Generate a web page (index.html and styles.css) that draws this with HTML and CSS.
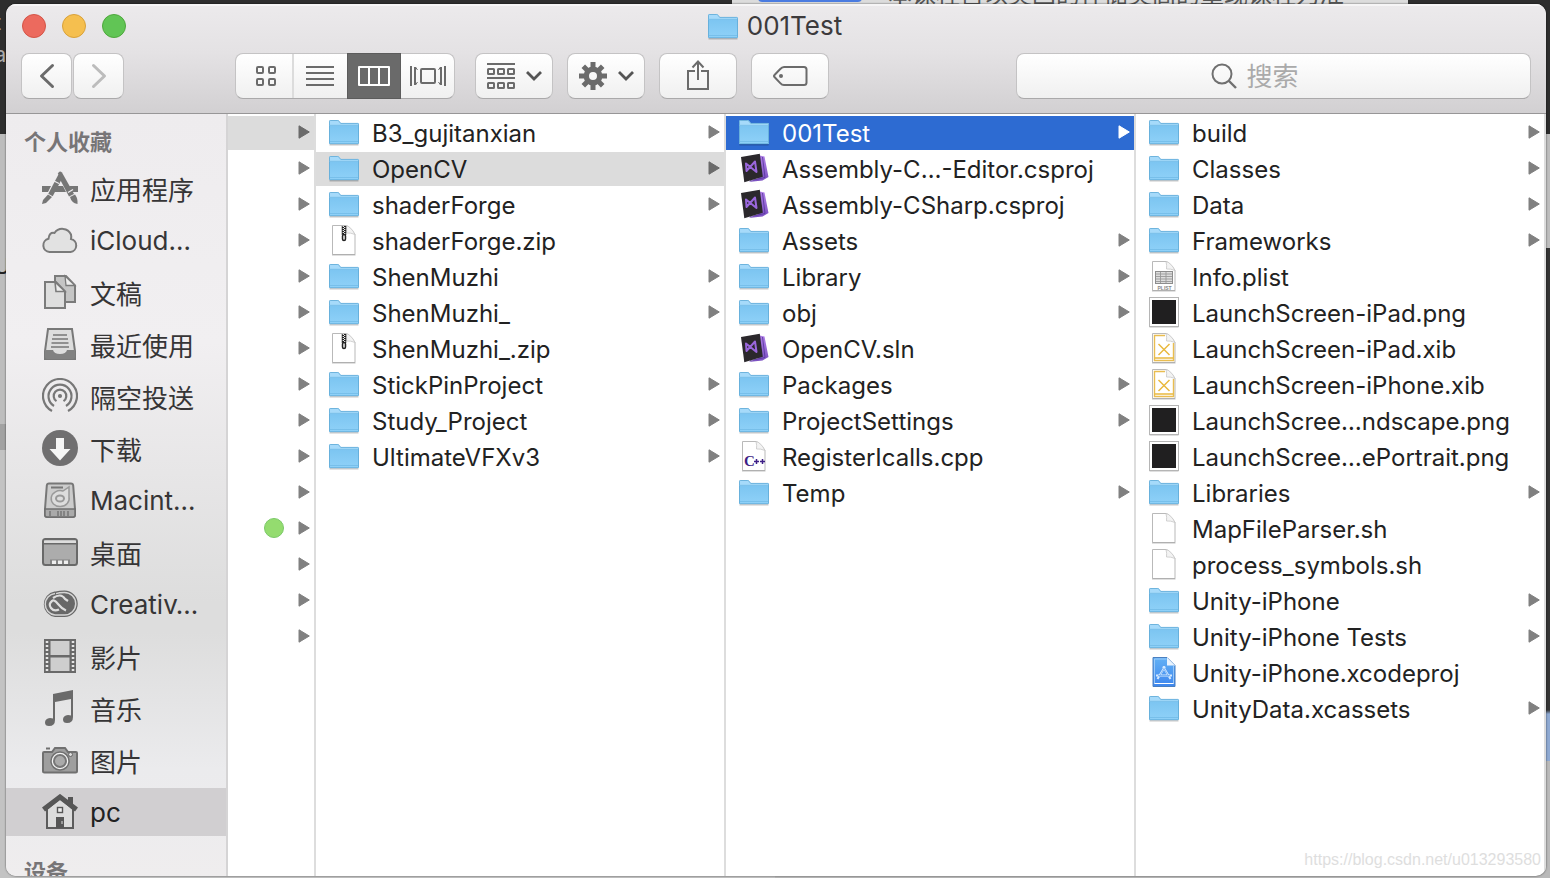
FILE: index.html
```html
<!DOCTYPE html>
<html lang="zh-CN">
<head>
<meta charset="utf-8">
<title>001Test</title>
<link rel="stylesheet" href="styles.css">
</head>
<body>
<svg class="defs" aria-hidden="true">
  <defs>
    <linearGradient id="gFolder" x1="0" y1="0" x2="0" y2="1"><stop offset="0" stop-color="#7cc5f1"/><stop offset="1" stop-color="#8fd1f8"/></linearGradient>
    <linearGradient id="gXcode" x1="0" y1="0" x2="0" y2="1"><stop offset="0" stop-color="#62b1f5"/><stop offset="1" stop-color="#3e86ee"/></linearGradient>
    <linearGradient id="gVs" x1="0" y1="0" x2="0" y2="1"><stop offset="0" stop-color="#b07fe8"/><stop offset="1" stop-color="#7a4fc0"/></linearGradient>
  </defs>
  <symbol id="folder" viewBox="0 0 32 32">
    <path d="M1.500 28.800h29" stroke="#000" stroke-opacity=".22" stroke-width="1.400"/>
    <path d="M1 27.500V5.500q0-1.500 1.500-1.500h7q1 0 1.800 1l1.500 2h17q1.200 0 1.200 1.200V27.500z" fill="#a6dafa"/>
    <path d="M1 9.500h30V27q0 1-1 1H2q-1 0-1-1z" fill="url(#gFolder)"/>
    <path d="M1.500 9.500V27q0 .700.700.700h27.600q.700 0 .700-.700V8.200q0-.800-.800-.800H12.700L11 5.200q-.500-.700-1.300-.700H2.300q-.800 0-.800.800z" fill="none" stroke="#5fa9d6" stroke-width=".8"/>
    <path d="M2 9.300h28M2 25.500h28" stroke="#6fb8e4" stroke-width=".7"/>
  </symbol>
  <symbol id="page" viewBox="0 0 32 32">
    <path d="M4.500 1.500h13.500q4 1 9 9v20H4.500z" fill="#fff" stroke="#b9b9b9"/>
    <path d="M4 31h23.500" stroke="#999" stroke-opacity=".6"/>
    <path d="M18 1.500q1 4 .5 7.500 4-.5 8.500 1.500-4-8-9-9z" fill="#f3f3f3" stroke="#c6c6c6" stroke-width=".8"/>
  </symbol>
  <symbol id="zip" viewBox="0 0 32 32">
    <use href="#page"/>
    <path d="M16 2v9" stroke="#222" stroke-width="4.500"/>
    <path d="M15.300 2v9M16.700 3v8" stroke="#fff" stroke-width="1.200" stroke-dasharray="1 1"/>
    <rect x="14.500" y="10.500" width="3" height="6" rx="1.500" fill="#eee" stroke="#222" stroke-width="1.500"/>
  </symbol>
  <symbol id="vs" viewBox="0 0 32 32">
    <path d="M20 3l6.500 1.500L30.500 25l-6 3.500-14 1.500 10-4z" fill="url(#gVs)"/>
    <path d="M24.500 5l2.500 20.500-15 3" fill="none" stroke="#55339a" stroke-width=".8"/>
    <path d="M3 5L21.800 1.800l3 23L6.300 30.300z" fill="#2b282c"/>
    <path d="M8 11.500l.500 7.500 8.500-9.500 1.500 10.500z" fill="none" stroke="#9a67dc" stroke-width="2" stroke-linejoin="round"/>
  </symbol>
  <symbol id="cpp" viewBox="0 0 32 32">
    <use href="#page"/>
    <text x="6" y="26" class="glyph-cpp">C</text>
    <path d="M16 21.500h5M18.500 19v5M22 21.500h5M24.500 19v5" stroke="#3d1f86" stroke-width="1.500"/>
  </symbol>
  <symbol id="plist" viewBox="0 0 32 32">
    <use href="#page"/>
    <rect x="7.500" y="11.500" width="17" height="12" fill="#ddd" stroke="#8d8d8d"/>
    <path d="M8 14h16M8 16.500h16M8 19h16M8 21.500h16M12.500 12v11M18 12v11" stroke="#999" stroke-width=".9"/>
    <text x="9.500" y="29.500" class="glyph-plist">PLIST</text>
  </symbol>
  <symbol id="png" viewBox="0 0 32 32">
    <rect x="1.500" y="2.500" width="29" height="29" fill="#000" opacity=".25"/>
    <rect x="1.500" y="1.500" width="29" height="29" fill="#fff" stroke="#b5b5b5"/>
    <rect x="4" y="4" width="24" height="24" fill="#201f20"/>
  </symbol>
  <symbol id="xib" viewBox="0 0 32 32">
    <use href="#page"/>
    <path d="M17 3.500H6.500v25h19V11" fill="none" stroke="#e9bd50" stroke-width="1.400"/>
    <path d="M6.500 26h19M10.500 12l11 11M21.500 12l-11 11" stroke="#e9b93f" stroke-width="1.500"/>
  </symbol>
  <symbol id="xcode" viewBox="0 0 32 32">
    <path d="M5 1.500h14l8 8v21H5z" fill="url(#gXcode)" stroke="#4a7fc0"/>
    <path d="M6.500 3h12M6.500 3v24.500h19V10" fill="none" stroke="#a9d2fa" stroke-width=".8"/>
    <path d="M19 1.500v8h8z" fill="#e9f3fd"/>
    <path d="M6.500 27.500h19" stroke="#fff"/>
    <path d="M9.500 23l7.500-12.500M22.500 23L15 10.500M8 19.500h16" stroke="#d5eaff" stroke-width="2"/>
    <path d="M11 21l5-8.500M21 21l-5-8.500M10 19.500h12" stroke="#5a9ff0" stroke-width=".7"/>
  </symbol>
  <symbol id="arrow" viewBox="0 0 12 14"><path d="M1 .800L11.300 7 1 13.200z" fill="currentColor" stroke="currentColor" stroke-linejoin="round"/></symbol>
</svg>

<div class="desktop" aria-hidden="true">
  <div class="top-strip"><span class="top-tab"></span><span class="top-text">本课程旨以美国的存储美高的重现课程为准</span></div>
  <div class="left-strip"><span>t</span><span>a</span><span class="dark-letter">U</span></div>
</div>

<main class="window">
  <header class="chrome">
    <div class="titlebar">
      <div class="lights">
        <button class="light close" aria-label="关闭"></button>
        <button class="light minimize" aria-label="最小化"></button>
        <button class="light maximize" aria-label="缩放"></button>
      </div>
      <h1 class="title"><svg class="icon"><use href="#folder"/></svg>001Test</h1>
    </div>
    <div class="toolbar">
      <div class="nav">
        <button class="tool nav-btn" aria-label="后退"><svg width="16" height="26" viewBox="0 0 16 26"><path d="M13.500 2.500L2.500 13l11 10.500" fill="none" stroke="#6b6b6b" stroke-width="3" stroke-linecap="round" stroke-linejoin="round"/></svg></button>
        <button class="tool nav-btn" aria-label="前进"><svg width="16" height="26" viewBox="0 0 16 26"><path d="M2.500 2.500l11 10.500-11 10.500" fill="none" stroke="#bcbcbc" stroke-width="3" stroke-linecap="round" stroke-linejoin="round"/></svg></button>
      </div>
      <div class="views">
        <button class="view first" aria-label="图标"><svg width="22" height="22" viewBox="0 0 22 22" fill="none" stroke="#6b6b6b" stroke-width="2"><rect x="2" y="2" width="6" height="6" rx="1"/><rect x="14" y="2" width="6" height="6" rx="1"/><rect x="2" y="14" width="6" height="6" rx="1"/><rect x="14" y="14" width="6" height="6" rx="1"/></svg></button>
        <button class="view" aria-label="列表"><svg width="28" height="22" viewBox="0 0 28 22"><path d="M0 2h28M0 8h28M0 14h28M0 20h28" stroke="#6b6b6b" stroke-width="2"/></svg></button>
        <button class="view active" aria-label="分栏" aria-pressed="true"><svg width="32" height="20" viewBox="0 0 32 20"><path d="M1 1h30v18H1zM11 1v18M21 1v18" fill="none" stroke="#fff" stroke-width="2" stroke-linejoin="round"/></svg></button>
        <button class="view" aria-label="封面流"><svg width="38" height="22" viewBox="0 0 38 22" fill="none" stroke="#6b6b6b" stroke-width="2"><rect x="12" y="4" width="14" height="14" rx="1"/><path d="M2 1v20M36 1v20"/><path d="M6 2v18M32 2v18" stroke-width="2"/><path d="M6.500 2l2 3M6.500 20l2-3M31.500 2l-2 3M31.500 20l-2-3" stroke-width="1"/></svg></button>
      </div>
      <button class="tool menu-btn" aria-label="排列">
        <svg width="28" height="28" viewBox="0 0 28 28" fill="none" stroke="#6b6b6b" stroke-width="2"><path d="M0 2h28M0 16h28"/><rect x="1" y="7" width="6" height="5" rx=".5"/><rect x="11" y="7" width="6" height="5" rx=".5"/><rect x="21" y="7" width="6" height="5" rx=".5"/><rect x="1" y="21" width="6" height="5" rx=".5"/><rect x="11" y="21" width="6" height="5" rx=".5"/><rect x="21" y="21" width="6" height="5" rx=".5"/></svg>
        <svg width="16" height="10" viewBox="0 0 16 10"><path d="M1 1l7 7 7-7" fill="none" stroke="#555" stroke-width="2.800"/></svg>
      </button>
      <button class="tool menu-btn" aria-label="操作">
        <svg width="28" height="28" viewBox="-14 -14 28 28"><g stroke="#6b6b6b" stroke-width="5"><path d="M0-14V-5M0 5V14M-14 0H-5M5 0H14M-9.700-9.700L-4-4M4 4l5.700 5.700M-9.700 9.700L-4 4M4-4l5.700-5.700"/></g><circle r="6.700" fill="none" stroke="#6b6b6b" stroke-width="5.400"/></svg>
        <svg width="16" height="10" viewBox="0 0 16 10"><path d="M1 1l7 7 7-7" fill="none" stroke="#555" stroke-width="2.800"/></svg>
      </button>
      <button class="tool menu-btn" aria-label="共享"><svg width="24" height="32" viewBox="0 0 24 32" fill="none" stroke="#6b6b6b" stroke-width="2"><path d="M9 11H2v18h20V11h-7M12 20V2M6.500 7.500L12 1.500l5.500 6"/></svg></button>
      <button class="tool menu-btn" aria-label="标记"><svg width="36" height="22" viewBox="0 0 36 22"><path d="M12 2h20q2.500 0 2.500 2.500v13q0 2.500-2.500 2.500H12q-2 0-4-2.200L2.500 12q-1-1 0-2L8 4.200Q10 2 12 2z" fill="none" stroke="#6b6b6b" stroke-width="2"/><circle cx="9" cy="11" r="2" fill="#6b6b6b"/></svg></button>
      <label class="search">
        <svg width="26" height="26" viewBox="0 0 26 26" fill="none" stroke="#707070" stroke-width="2"><circle cx="11" cy="11" r="9.500"/><path d="M17.500 17.500l7.500 7.500" stroke-width="2.400"/></svg>
        <input type="search" placeholder="搜索" aria-label="搜索">
      </label>
    </div>
  </header>

  <div class="body">
    <nav class="sidebar" aria-label="边栏">
      <h2>个人收藏</h2>
      <ul>
        <li><a href="#"><svg viewBox="0 0 36 36"><path d="M0 16h9l-3 6H0zM15 16h6l3 6H12zM27 16h9v6h-6z" fill="#767676"/><path d="M18.500 6L8.500 25" stroke="#767676" stroke-width="5"/><path d="M11 10.500l6 3" stroke="#efedef" stroke-width="1.200"/><path d="M6 24.500l4 2.500-6 6-4 1 1-4z" fill="#767676"/><path d="M16 3.500q1.500-3.500 4-1L32 24l-5 2.500-10-19z" fill="#767676"/><path d="M26 22.500l5-3" stroke="#efedef" stroke-width="1.400"/><path d="M28 27l5-2.500q3 4 2.500 9.500-6-1-7.500-7z" fill="#767676"/></svg>应用程序</a></li>
        <li><a href="#"><svg viewBox="0 0 36 36"><path d="M7.500 30a6.700 6.700 0 0 1-1-13.200Q7 10 12.500 11A9.500 9.500 0 0 1 29 12.500q.500 2 0 4.500a6.600 6.600 0 0 1-.5 13z" fill="#e2e2e2" stroke="#7a7a7a" stroke-width="2"/></svg>iCloud…</a></li>
        <li><a href="#"><svg viewBox="0 0 36 36" stroke="#7b7b7b" stroke-width="2"><path d="M13 2h11l9 9.500V28H13z" fill="#c5c5c5"/><path d="M23 2l1 9.500h9z" fill="#eee" stroke-width="1.300"/><path d="M3 8h11l9 9.500V34H3z" fill="#dedede"/><path d="M13 8l1 9.500h9z" fill="#eee" stroke-width="1.600"/></svg>文稿</a></li>
        <li><a href="#"><svg viewBox="0 0 36 36"><path d="M6 3h24l3 22v8H3v-8z" fill="#ddd" stroke="#787878" stroke-width="2"/><path d="M3 24h8q1 4 7 4t7-4h8v7q0 2-2 2H5q-2 0-2-2z" fill="#818181"/><path d="M11 9h14M10 13h16M9.500 17h17M9 21h18" stroke="#777" stroke-width="1.500"/></svg>最近使用</a></li>
        <li><a href="#"><svg viewBox="0 0 36 36" fill="none" stroke="#777" stroke-width="2.200"><path d="M10 33A17 17 0 1 1 26 33"/><path d="M12 28A11.500 11.500 0 1 1 24 28"/><path d="M14.500 23.200A6.300 6.300 0 1 1 21.500 23.200"/><circle cx="18" cy="18" r="1.300" fill="#777" stroke-width="1.500"/></svg>隔空投送</a></li>
        <li><a href="#"><svg viewBox="0 0 36 36"><circle cx="18" cy="18" r="18" fill="#706f70"/><path d="M14 8h8v11h6.500L18 30.500 7.500 19H14z" fill="#f6f6f6"/></svg>下载</a></li>
        <li><a href="#"><svg viewBox="0 0 36 36"><path d="M7 1.500h22q2 0 2.200 2L33 27v6q0 2-2 2H5q-2 0-2-2v-6L4.800 3.500Q5 1.500 7 1.500z" fill="#ccc" stroke="#777" stroke-width="2"/><path d="M3 27h30v6q0 2-2 2H5q-2 0-2-2z" fill="#aaa" stroke="#6f6f6f" stroke-width="1.500"/><path d="M9 5.500h12" stroke="#777" stroke-width="2"/><path d="M27 5v10a9 8 0 1 1-6-6z" fill="#ddd" stroke="#999" stroke-width="1.500"/><ellipse cx="18" cy="16.500" rx="4" ry="3" fill="none" stroke="#999" stroke-width="2"/><path d="M8 29v5M16 29v5M19 29v5M22 29v5M26 29v5" stroke="#777" stroke-width="1.500"/></svg>Macint…</a></li>
        <li><a href="#"><svg viewBox="0 0 36 36"><rect x="1" y="5" width="34" height="26" rx="2.500" fill="#acacac" stroke="#696969" stroke-width="2"/><path d="M2 6.500h32V9H2z" fill="#ddd"/><path d="M1 9.800h34" stroke="#696969" stroke-width="1.500"/><path d="M8 25.500h20V30H8z" fill="#858585"/><path d="M10 26.500h4V30h-4zM16 26.500h4V30h-4zM22 26.500h4V30h-4z" fill="#eee"/></svg>桌面</a></li>
        <li><a href="#"><svg viewBox="0 0 36 36"><path d="M13 31a12.900 12.900 0 0 1-.5-25.500h1Q17 4.500 22.500 4.500a13.200 13.200 0 0 1 0 26.500z" fill="#686868"/><path d="M13 29a10.800 10.800 0 0 1 0-21.500M14 7.600Q17 6.500 22.500 6.500a11.200 11.200 0 0 1 0 22.500H13" fill="none" stroke="#d5d5d5" stroke-width="1.500"/><path d="M24 24.500Q20 23 16 18t-6-3q-4 3-1 7t8 1.500M11 12q8-5.500 12 1l3 2" fill="none" stroke="#dedede" stroke-width="2.200"/></svg>Creativ…</a></li>
        <li><a href="#"><svg viewBox="0 0 36 36"><path d="M2 1h32v34H2z" fill="#696969"/><path d="M8.500 3h19v14h-19zM8.500 19.500h19V33h-19z" fill="#cecece"/><path d="M5 3v31M31 3v31" stroke="#e5e5e5" stroke-width="2.500" stroke-dasharray="2 2"/></svg>影片</a></li>
        <li><a href="#"><svg viewBox="0 0 36 36"><path d="M11 4l20-4v27q0 6-6 6-4 0-4-3.500 0-4 5-4.500 2 0 3 .5V9l-16 3v18q0 6-6 6-4 0-4-3.500 0-4 5-4.500 2 0 3 .5z" fill="#6a6a6a"/></svg>音乐</a></li>
        <li><a href="#"><svg viewBox="0 0 36 36"><path d="M2 10h8l3-4h10l3 4h8q1 0 1 1v18q0 1.500-1.500 1.500h-31Q1 30.500 1 29V11q0-1 1-1z" fill="#9e9e9e" stroke="#707070" stroke-width="2"/><path d="M4 6.500h4" stroke="#707070" stroke-width="2"/><circle cx="18" cy="19" r="9" fill="#f3f3f3" stroke="#707070" stroke-width="1.500"/><circle cx="18" cy="19" r="6" fill="#aaa" stroke="#777" stroke-width="2"/><circle cx="28.500" cy="12.500" r="2" fill="#ddd" stroke="#666"/></svg>图片</a></li>
        <li><a href="#" class="current"><svg viewBox="0 0 36 36"><path d="M26 3h5v11l-5-4z" fill="#565656"/><path d="M5 15L18 4l13 11v19H5z" fill="#dcdcdc" stroke="#5c5c5c" stroke-width="2"/><path d="M1.500 15.500L18 3l16.500 12.500" fill="none" stroke="#565656" stroke-width="5"/><path d="M14 23h8v11h-8z" fill="#565656"/><path d="M20 27v3" stroke="#ddd"/><rect x="15.500" y="13.500" width="5" height="5" fill="#eee" stroke="#565656" stroke-width="1.400"/></svg>pc</a></li>
      </ul>
      <h2 class="next-group">设备</h2>
    </nav>

    <ul class="column narrow">
      <li><button class="row selected" aria-label="文件夹 1"><svg class="arrow"><use href="#arrow"/></svg></button></li>
      <li><button class="row" aria-label="文件夹 2"><svg class="arrow"><use href="#arrow"/></svg></button></li>
      <li><button class="row" aria-label="文件夹 3"><svg class="arrow"><use href="#arrow"/></svg></button></li>
      <li><button class="row" aria-label="文件夹 4"><svg class="arrow"><use href="#arrow"/></svg></button></li>
      <li><button class="row" aria-label="文件夹 5"><svg class="arrow"><use href="#arrow"/></svg></button></li>
      <li><button class="row" aria-label="文件夹 6"><svg class="arrow"><use href="#arrow"/></svg></button></li>
      <li><button class="row" aria-label="文件夹 7"><svg class="arrow"><use href="#arrow"/></svg></button></li>
      <li><button class="row" aria-label="文件夹 8"><svg class="arrow"><use href="#arrow"/></svg></button></li>
      <li><button class="row" aria-label="文件夹 9"><svg class="arrow"><use href="#arrow"/></svg></button></li>
      <li><button class="row" aria-label="文件夹 10"><svg class="arrow"><use href="#arrow"/></svg></button></li>
      <li><button class="row" aria-label="文件夹 11"><svg class="arrow"><use href="#arrow"/></svg></button></li>
      <li><button class="row" aria-label="文件夹 12"><span class="tag"></span><svg class="arrow"><use href="#arrow"/></svg></button></li>
      <li><button class="row" aria-label="文件夹 13"><svg class="arrow"><use href="#arrow"/></svg></button></li>
      <li><button class="row" aria-label="文件夹 14"><svg class="arrow"><use href="#arrow"/></svg></button></li>
      <li><button class="row" aria-label="文件夹 15"><svg class="arrow"><use href="#arrow"/></svg></button></li>
    </ul>

    <ul class="column">
      <li><button class="row"><svg class="icon"><use href="#folder"/></svg><span class="name">B3_gujitanxian</span><svg class="arrow"><use href="#arrow"/></svg></button></li>
      <li><button class="row selected"><svg class="icon"><use href="#folder"/></svg><span class="name">OpenCV</span><svg class="arrow"><use href="#arrow"/></svg></button></li>
      <li><button class="row"><svg class="icon"><use href="#folder"/></svg><span class="name">shaderForge</span><svg class="arrow"><use href="#arrow"/></svg></button></li>
      <li><button class="row"><svg class="icon"><use href="#zip"/></svg><span class="name">shaderForge.zip</span></button></li>
      <li><button class="row"><svg class="icon"><use href="#folder"/></svg><span class="name">ShenMuzhi</span><svg class="arrow"><use href="#arrow"/></svg></button></li>
      <li><button class="row"><svg class="icon"><use href="#folder"/></svg><span class="name">ShenMuzhi_</span><svg class="arrow"><use href="#arrow"/></svg></button></li>
      <li><button class="row"><svg class="icon"><use href="#zip"/></svg><span class="name">ShenMuzhi_.zip</span></button></li>
      <li><button class="row"><svg class="icon"><use href="#folder"/></svg><span class="name">StickPinProject</span><svg class="arrow"><use href="#arrow"/></svg></button></li>
      <li><button class="row"><svg class="icon"><use href="#folder"/></svg><span class="name">Study_Project</span><svg class="arrow"><use href="#arrow"/></svg></button></li>
      <li><button class="row"><svg class="icon"><use href="#folder"/></svg><span class="name">UltimateVFXv3</span><svg class="arrow"><use href="#arrow"/></svg></button></li>
    </ul>

    <ul class="column">
      <li><button class="row focused"><svg class="icon"><use href="#folder"/></svg><span class="name">001Test</span><svg class="arrow"><use href="#arrow"/></svg></button></li>
      <li><button class="row"><svg class="icon"><use href="#vs"/></svg><span class="name">Assembly-C…-Editor.csproj</span></button></li>
      <li><button class="row"><svg class="icon"><use href="#vs"/></svg><span class="name">Assembly-CSharp.csproj</span></button></li>
      <li><button class="row"><svg class="icon"><use href="#folder"/></svg><span class="name">Assets</span><svg class="arrow"><use href="#arrow"/></svg></button></li>
      <li><button class="row"><svg class="icon"><use href="#folder"/></svg><span class="name">Library</span><svg class="arrow"><use href="#arrow"/></svg></button></li>
      <li><button class="row"><svg class="icon"><use href="#folder"/></svg><span class="name">obj</span><svg class="arrow"><use href="#arrow"/></svg></button></li>
      <li><button class="row"><svg class="icon"><use href="#vs"/></svg><span class="name">OpenCV.sln</span></button></li>
      <li><button class="row"><svg class="icon"><use href="#folder"/></svg><span class="name">Packages</span><svg class="arrow"><use href="#arrow"/></svg></button></li>
      <li><button class="row"><svg class="icon"><use href="#folder"/></svg><span class="name">ProjectSettings</span><svg class="arrow"><use href="#arrow"/></svg></button></li>
      <li><button class="row"><svg class="icon"><use href="#cpp"/></svg><span class="name">RegisterIcalls.cpp</span></button></li>
      <li><button class="row"><svg class="icon"><use href="#folder"/></svg><span class="name">Temp</span><svg class="arrow"><use href="#arrow"/></svg></button></li>
    </ul>

    <ul class="column">
      <li><button class="row"><svg class="icon"><use href="#folder"/></svg><span class="name">build</span><svg class="arrow"><use href="#arrow"/></svg></button></li>
      <li><button class="row"><svg class="icon"><use href="#folder"/></svg><span class="name">Classes</span><svg class="arrow"><use href="#arrow"/></svg></button></li>
      <li><button class="row"><svg class="icon"><use href="#folder"/></svg><span class="name">Data</span><svg class="arrow"><use href="#arrow"/></svg></button></li>
      <li><button class="row"><svg class="icon"><use href="#folder"/></svg><span class="name">Frameworks</span><svg class="arrow"><use href="#arrow"/></svg></button></li>
      <li><button class="row"><svg class="icon"><use href="#plist"/></svg><span class="name">Info.plist</span></button></li>
      <li><button class="row"><svg class="icon"><use href="#png"/></svg><span class="name">LaunchScreen-iPad.png</span></button></li>
      <li><button class="row"><svg class="icon"><use href="#xib"/></svg><span class="name">LaunchScreen-iPad.xib</span></button></li>
      <li><button class="row"><svg class="icon"><use href="#xib"/></svg><span class="name">LaunchScreen-iPhone.xib</span></button></li>
      <li><button class="row"><svg class="icon"><use href="#png"/></svg><span class="name">LaunchScree…ndscape.png</span></button></li>
      <li><button class="row"><svg class="icon"><use href="#png"/></svg><span class="name">LaunchScree…ePortrait.png</span></button></li>
      <li><button class="row"><svg class="icon"><use href="#folder"/></svg><span class="name">Libraries</span><svg class="arrow"><use href="#arrow"/></svg></button></li>
      <li><button class="row"><svg class="icon"><use href="#page"/></svg><span class="name">MapFileParser.sh</span></button></li>
      <li><button class="row"><svg class="icon"><use href="#page"/></svg><span class="name">process_symbols.sh</span></button></li>
      <li><button class="row"><svg class="icon"><use href="#folder"/></svg><span class="name">Unity-iPhone</span><svg class="arrow"><use href="#arrow"/></svg></button></li>
      <li><button class="row"><svg class="icon"><use href="#folder"/></svg><span class="name">Unity-iPhone Tests</span><svg class="arrow"><use href="#arrow"/></svg></button></li>
      <li><button class="row"><svg class="icon"><use href="#xcode"/></svg><span class="name">Unity-iPhone.xcodeproj</span></button></li>
      <li><button class="row"><svg class="icon"><use href="#folder"/></svg><span class="name">UnityData.xcassets</span><svg class="arrow"><use href="#arrow"/></svg></button></li>
    </ul>
  </div>
</main>
<p class="watermark">https://blog.csdn.net/u013293580</p>
</body>
</html>
```
FILE: styles.css
```css
* { box-sizing: border-box; }

body {
  margin: 0;
  height: 100vh;
  padding: 4px 4px 2px 6px;
  overflow: hidden;
  font-family: Inter, "Noto Sans CJK SC", sans-serif;
  font-size: 24px;
  color: #222;
}

ul { list-style: none; margin: 0; padding: 0; }
h1, h2, p { margin: 0; }
button { border: 0; padding: 0; font: inherit; color: inherit; background: none; }
.defs { position: absolute; width: 0; height: 0; }

/* desktop behind the window */
.desktop {
  position: absolute;
  inset: 0;
  z-index: -1;
  overflow: hidden;
  background:
    linear-gradient(#2e2e2e 134px, #bdbdbd 134px, #bdbdbd 248px, #343434 248px, #343434 710px, #8ea9d2 714px, #8ea9d2 761px, #b9b9b9 761px) right / 50% 100% no-repeat,
    linear-gradient(#2e2e2e 134px, #bdbdbd 134px, #bdbdbd 424px, #a2a2a2 424px, #a2a2a2 450px, #c3c3c3 450px) left / 50% 100% no-repeat;
}
.top-strip {
  position: absolute;
  top: 0;
  left: 732px;
  width: 676px;
  height: 8px;
  overflow: hidden;
  background: #dcdcdc;
}
.top-tab { position: absolute; top: -6px; left: 26px; width: 104px; height: 8px; border-radius: 4px; background: #4a7be0; }
.top-text { position: absolute; bottom: -2px; left: 156px; font-size: 24px; line-height: 30px; color: #555; white-space: nowrap; }
.left-strip { position: absolute; top: 6px; left: -6px; display: flex; flex-direction: column; font-size: 22px; line-height: 32px; color: #aaa; }
.left-strip .dark-letter { margin-top: 180px; color: #222; }

.window {
  display: flex;
  flex-direction: column;
  height: 100%;
  overflow: hidden;
  border-radius: 10px;
  background: #fff;
  box-shadow: 0 0 2px rgba(0, 0, 0, .7);
}

.chrome {
  flex: none;
  padding: 0 15px 14px;
  background: linear-gradient(#eceaec, #e4e2e4 45%, #d2d0d2);
  border-bottom: 1px solid #979697;
  box-shadow: inset 0 2px 0 #f6f5f6;
}
.titlebar { display: grid; grid-template-columns: 1fr auto 1fr; align-items: center; height: 49px; padding: 0 4px 5px 1px; }
.lights { display: flex; gap: 16px; }
.light { width: 24px; height: 24px; border-radius: 50%; }
.close { background: #ec6a5e; border: 1px solid #d35447; }
.minimize { background: #f5bf4f; border: 1px solid #d8a13a; }
.maximize { background: #61c555; border: 1px solid #4ea73c; }
.title { display: flex; align-items: center; gap: 8px; font-size: 26px; font-weight: 400; line-height: 32px; color: #3c3a3c; }

.toolbar { display: flex; align-items: center; }
.nav { display: flex; gap: 1px; margin-right: 111px; }
.tool, .views, .search {
  height: 46px;
  border: 1px solid #c4c3c4;
  border-bottom-color: #aaa9aa;
  border-radius: 8px;
  background: linear-gradient(#fff, #f0f0f0);
}
.tool { display: flex; align-items: center; justify-content: center; }
.nav-btn { width: 51px; }
.views { display: flex; width: 220px; margin-right: 20px; }
.view { flex: 1; display: flex; align-items: center; justify-content: center; }
.view.first { flex: none; width: 58px; padding-left: 3px; border-right: 2px solid #dcdcdc; }
.view.active { margin: -1px 0; background: #6a6a6a; border: 1px solid #5c5c5c; }
.menu-btn { width: 78px; gap: 11px; margin-right: 14px; }
.search { flex: 1; display: flex; align-items: center; justify-content: center; gap: 10px; margin-left: 173px; }
.search input { width: 90px; padding: 0; border: 0; outline: 0; background: none; font: inherit; font-size: 26px; }
.search input::placeholder { color: #aaa; }

.body { flex: 1; display: flex; min-height: 0; }

.sidebar {
  flex: none;
  width: 222px;
  overflow: hidden;
  border-right: 2px solid #d5d4d5;
  background: linear-gradient(#eeecee, #f1eff1 30%, #dddddd 64%, #dddddd 68%, #ebebed 86%, #efedee);
}
.sidebar h2 { padding: 12px 0 6px 18px; font-size: 22px; line-height: 32px; font-weight: 600; color: #777577; }
.sidebar .next-group { padding-top: 20px; }
.sidebar ul { display: flex; flex-direction: column; gap: 4px; }
.sidebar a {
  display: flex;
  align-items: center;
  gap: 12px;
  height: 48px;
  padding-left: 36px;
  font-size: 26px;
  color: #363536;
  text-decoration: none;
  white-space: nowrap;
}
.sidebar a svg { flex: none; width: 36px; height: 36px; }
.sidebar a.current { background: #d1cfd1; color: #222; }

.column {
  flex: 1;
  min-width: 0;
  display: flex;
  flex-direction: column;
  gap: 2px;
  padding-top: 2px;
  border-right: 2px solid #dddddd;
}
.column.narrow { flex: none; width: 88px; }
.row {
  display: flex;
  align-items: center;
  justify-content: flex-end;
  gap: 12px;
  width: 100%;
  height: 34px;
  padding: 0 4px 2px 12px;
  text-align: left;
}
.narrow .row { gap: 14px; }
.name { flex: 1; padding-top: 4px; white-space: nowrap; line-height: 30px; }
.icon { flex: none; width: 32px; height: 32px; }
.arrow { flex: none; width: 12px; height: 14px; color: #808080; }
.row.selected { background: #dcdcdc; }
.row.selected .arrow { color: #6b6b6b; }
.row.focused { background: #2d6bd2; color: #fff; }
.row.focused .arrow { color: #fff; }
.tag { width: 20px; height: 20px; border: 1px solid #7bc968; border-radius: 50%; background: #94dc6f; }

.glyph-cpp { font: bold 15px "Liberation Serif", serif; fill: #3d1f86; }
.glyph-plist { font: bold 5px "Liberation Sans", sans-serif; fill: #888; }

.watermark {
  position: absolute;
  right: 9px;
  bottom: 8px;
  font: 16px/20px "Liberation Sans", sans-serif;
  color: #dedede;
}
```
